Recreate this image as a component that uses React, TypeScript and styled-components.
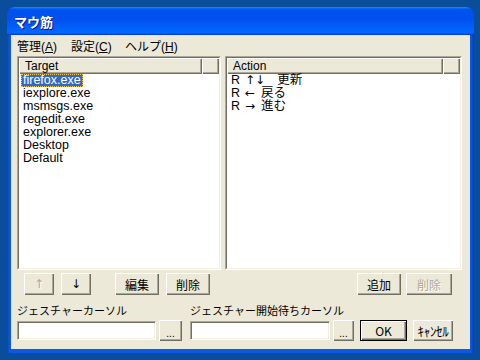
import React from 'react';
import styled, { createGlobalStyle } from 'styled-components';

const Global = createGlobalStyle`
  html, body { margin: 0; padding: 0; }
  body {
    background: #0A4D9A;
    width: 480px;
    height: 360px;
    overflow: hidden;
    font-family: "Liberation Sans", "Noto Sans CJK JP", sans-serif;
  }
`;

const Desktop = styled.div`
  width: 480px;
  height: 360px;
  box-sizing: border-box;
  padding: 7px 0 0 7px;
`;

const Window = styled.div`
  width: 467px;
  height: 346px;
  display: flex;
  flex-direction: column;
  background: linear-gradient(90deg, #0842C8, #0A5AE6 3px, #0A5AE6 calc(100% - 3px), #0438B8);
  border-radius: 8px 8px 0 0;
  overflow: hidden;
`;

const TitleBar = styled.div`
  height: 28px;
  flex: none;
  display: flex;
  align-items: center;
  padding-left: 7px;
  background: linear-gradient(#0997ff, #0053ee 8%, #0050ee 40%, #0066ff 88%, #0066ff 93%, #005bff 95%, #003dd7 96%, #003dd7);
  color: #fff;
  font-family: "Noto Sans CJK JP", sans-serif;
  font-weight: bold;
  font-size: 13px;
  text-shadow: 1px 1px #0f1089;
  border-radius: 8px 8px 0 0;
`;

const Client = styled.div`
  flex: 1;
  margin: 0 4px 4px;
  background: #ECE9D8;
  display: flex;
  flex-direction: column;
  color: #000;
`;

const MenuBar = styled.div`
  height: 20px;
  display: flex;
  align-items: center;
`;

const MenuItem = styled.div`
  width: 54px;
  box-sizing: border-box;
  padding-left: 6px;
  font-size: 12px;
  white-space: nowrap;
  u { text-decoration: underline; }
`;

const ListsRow = styled.div`
  display: flex;
  gap: 4px;
  margin: 1px 8px 0 6px;
  height: 214px;
`;

const ListOuter = styled.div<{ $w?: number }>`
  ${(p) => (p.$w ? `width: ${p.$w}px;` : 'flex: 1;')}
  box-sizing: border-box;
  border: 1px solid;
  border-color: #ACA899 #FFFFFF #FFFFFF #ACA899;
  display: flex;
`;

const ListInner = styled.div`
  flex: 1;
  border: 1px solid;
  border-color: #716F64 #F1EFE2 #F1EFE2 #716F64;
  background: #fff;
  display: flex;
  flex-direction: column;
  overflow: hidden;
`;

const Header = styled.div`
  display: flex;
  height: 16px;
  flex: none;
`;

const HeaderCell = styled.div<{ $w?: number }>`
  ${(p) => (p.$w ? `width: ${p.$w}px;` : 'flex: 1;')}
  box-sizing: border-box;
  background: #ECE9D8;
  box-shadow: inset 1px 1px #fff, inset -1px -1px #716F64, inset -2px -2px #ACA899;
  font-size: 12px;
  line-height: 16px;
  padding-left: 6px;
`;

const Items = styled.div`
  display: flex;
  flex-direction: column;
  padding-left: 2px;
`;

const Item = styled.div`
  height: 13px;
  line-height: 13px;
  font-size: 12.5px;
  white-space: pre;
`;

const ItemText = styled.span<{ $sel?: boolean }>`
  display: inline-block;
  height: 13px;
  padding: 0 2px;
  box-sizing: border-box;
  ${(p) =>
    p.$sel
      ? `background: #316AC5; color: #fff; outline: 1px dotted #F2C25E; outline-offset: -1px;`
      : ''}
`;

const ArrowGlyph = styled.span<{ $after: number }>`
  font-family: "DejaVu Sans", sans-serif;
  font-size: 12px;
  margin-left: 5px;
  margin-right: ${(p) => p.$after}px;
`;

const ButtonRow = styled.div`
  display: flex;
  align-items: center;
  height: 22px;
  margin-top: 3px;
  padding: 0 18px 0 13px;
`;

const Group = styled.div<{ $gap: number; $ml?: number }>`
  display: flex;
  gap: ${(p) => p.$gap}px;
  margin-left: ${(p) => p.$ml ?? 0}px;
`;

const Spacer = styled.div`
  flex: 1;
`;

const Button = styled.div<{ $w: number; $h?: number; $disabled?: boolean; $default?: boolean }>`
  width: ${(p) => p.$w}px;
  height: ${(p) => p.$h ?? 22}px;
  box-sizing: border-box;
  display: flex;
  align-items: center;
  justify-content: center;
  background: #ECE9D8;
  font-family: "Noto Sans CJK JP", sans-serif;
  font-size: 12px;
  box-shadow: ${(p) =>
    p.$default
      ? 'inset 0 0 0 1px #000, inset 2px 2px #fff, inset -2px -2px #716F64, inset -3px -3px #ACA899'
      : 'inset 1px 1px #fff, inset -1px -1px #716F64, inset -2px -2px #ACA899'};
  color: ${(p) => (p.$disabled ? '#ACA899' : '#000')};
  text-shadow: ${(p) => (p.$disabled ? '1px 1px #fff' : 'none')};
`;

const Arrow = styled.span`
  font-family: "DejaVu Sans", sans-serif;
  font-size: 12px;
  line-height: 1;
`;

const HalfKana = styled.span`
  font-size: 13px;
  letter-spacing: -0.3px;
`;

const BottomArea = styled.div`
  display: flex;
  align-items: flex-end;
  margin-top: 7px;
  padding-left: 6px;
`;

const FieldGroup = styled.div<{ $ml?: number }>`
  display: flex;
  flex-direction: column;
  margin-left: ${(p) => p.$ml ?? 0}px;
`;

const Label = styled.div`
  height: 16px;
  line-height: 16px;
  font-family: "Noto Sans CJK JP", sans-serif;
  font-size: 11px;
  margin-bottom: 2px;
  white-space: nowrap;
`;

const FieldRow = styled.div`
  display: flex;
  align-items: center;
  gap: 3px;
  height: 21px;
`;

const Field = styled.div<{ $w: number }>`
  width: ${(p) => p.$w}px;
  height: 19px;
  box-sizing: border-box;
  background: #fff;
  border: 1px solid;
  border-color: #ACA899 #fff #fff #ACA899;
  box-shadow: inset 1px 1px #716F64, inset -1px -1px #F1EFE2;
`;

const Dots = styled.span`
  font-family: "Liberation Sans", sans-serif;
  font-size: 10px;
  padding-top: 5px;
`;

const DialogButtons = styled.div`
  display: flex;
  gap: 6px;
  margin-left: 6px;
  height: 21px;
  align-items: center;
`;

const targets = ['firefox.exe', 'iexplore.exe', 'msmsgs.exe', 'regedit.exe', 'explorer.exe', 'Desktop', 'Default'];
const actions: { arrow: string; name: string; after: number }[] = [
  { arrow: '↑↓', name: '更新', after: 12 },
  { arrow: '←', name: '戻る', after: 6 },
  { arrow: '→', name: '進む', after: 6 },
];

export default function App() {
  return (
    <>
      <Global />
      <Desktop>
        <Window>
          <TitleBar>マウ筋</TitleBar>
          <Client>
            <MenuBar>
              <MenuItem>管理(<u>A</u>)</MenuItem>
              <MenuItem>設定(<u>C</u>)</MenuItem>
              <MenuItem>ヘルプ(<u>H</u>)</MenuItem>
            </MenuBar>
            <ListsRow>
              <ListOuter $w={204}>
                <ListInner>
                  <Header>
                    <HeaderCell $w={183}>Target</HeaderCell>
                    <HeaderCell />
                  </Header>
                  <Items>
                    {targets.map((t, i) => (
                      <Item key={t}>
                        <ItemText $sel={i === 0}>{t}</ItemText>
                      </Item>
                    ))}
                  </Items>
                </ListInner>
              </ListOuter>
              <ListOuter>
                <ListInner>
                  <Header>
                    <HeaderCell $w={216}>Action</HeaderCell>
                    <HeaderCell />
                  </Header>
                  <Items>
                    {actions.map((a) => (
                      <Item key={a.arrow}>
                        <ItemText>
                          R
                          <ArrowGlyph $after={a.after}>{a.arrow}</ArrowGlyph>
                          {a.name}
                        </ItemText>
                      </Item>
                    ))}
                  </Items>
                </ListInner>
              </ListOuter>
            </ListsRow>
            <ButtonRow>
              <Group $gap={7}>
                <Button $w={30} $disabled>
                  <Arrow>↑</Arrow>
                </Button>
                <Button $w={30}>
                  <Arrow>↓</Arrow>
                </Button>
              </Group>
              <Group $gap={7} $ml={24}>
                <Button $w={44}>編集</Button>
                <Button $w={44}>削除</Button>
              </Group>
              <Spacer />
              <Group $gap={5}>
                <Button $w={44}>追加</Button>
                <Button $w={46} $disabled>削除</Button>
              </Group>
            </ButtonRow>
            <BottomArea>
              <FieldGroup>
                <Label>ジェスチャーカーソル</Label>
                <FieldRow>
                  <Field $w={139} />
                  <Button $w={23} $h={21}><Dots>...</Dots></Button>
                </FieldRow>
              </FieldGroup>
              <FieldGroup $ml={8}>
                <Label>ジェスチャー開始待ちカーソル</Label>
                <FieldRow>
                  <Field $w={140} />
                  <Button $w={21} $h={21}><Dots>...</Dots></Button>
                </FieldRow>
              </FieldGroup>
              <DialogButtons>
                <Button $w={47} $h={21} $default>OK</Button>
                <Button $w={40} $h={21}><HalfKana>ｷｬﾝｾﾙ</HalfKana></Button>
              </DialogButtons>
            </BottomArea>
          </Client>
        </Window>
      </Desktop>
    </>
  );
}
